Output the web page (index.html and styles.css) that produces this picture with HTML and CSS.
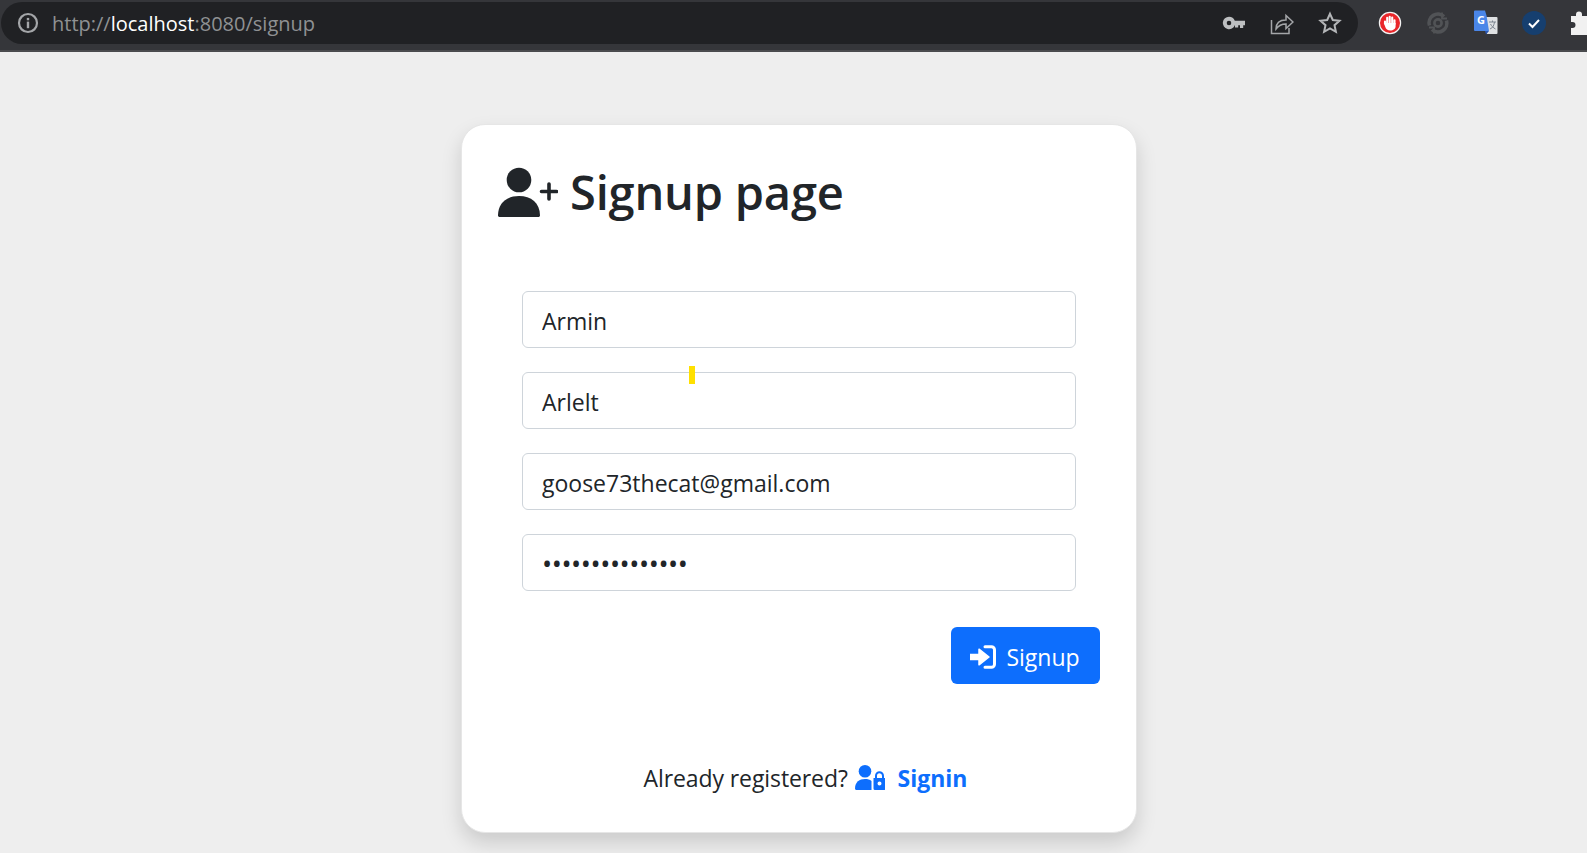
FILE: index.html
```html
<!DOCTYPE html>
<html lang="en">
<head>
<meta charset="utf-8">
<title>Signup page</title>
<link rel="stylesheet" href="styles.css">
</head>
<body>
<header class="toolbar">
  <div class="omnibox">
    <svg class="info-icon" viewBox="0 0 24 24" width="24" height="24"><circle cx="12" cy="12" r="9" fill="none" stroke="#a4a6a9" stroke-width="2.2"/><rect x="10.8" y="10.6" width="2.4" height="6.6" fill="#a4a6a9"/><rect x="10.8" y="6.9" width="2.4" height="2.4" fill="#a4a6a9"/></svg>
    <div class="url">http://<span class="host">localhost</span>:8080/signup</div>
    <div class="omni-actions">
      <svg viewBox="0 0 24 24" width="24" height="24"><path fill-rule="evenodd" d="M7 5.800a6.200 6.200 0 0 1 5.800 4h10.200v4.400h-1.800v2.800h-3.200v-2.800h-1.800v2.300h-3.200v-2.300h-.2A6.200 6.200 0 1 1 7 5.800Zm0 3.900a2.300 2.300 0 1 0 0 4.600 2.300 2.300 0 0 0 0-4.600Z" fill="#bdbfc1"/></svg>
      <svg viewBox="0 0 24 24" width="24" height="24" fill="none" stroke="#a4a6a9" stroke-width="1.5"><path d="M1.500 9v13.500h17.500v-5.500"/><path d="M6 18c0-6 4-9 10-9V4.500l7 6.500-7 6.500V13c-4 0-7.500 1.500-10 5Z"/></svg>
      <svg viewBox="0 0 24 24" width="24" height="24" fill="none" stroke="#b4b6b8" stroke-width="2"><path d="m12 2.800 2.800 6.200 6.700.7-5 4.500 1.400 6.600-5.900-3.400-5.900 3.400 1.400-6.600-5-4.500 6.700-.7Z"/></svg>
    </div>
  </div>
  <div class="extensions">
    <svg viewBox="0 0 26 26" width="26" height="26"><circle cx="13" cy="13" r="10.600" fill="#e9262a" stroke="#f4f4f4" stroke-width="1.200"/><path d="M8 13.500v-2M10.200 13V7.800M12.700 13V6.800M15.200 13V7.600M17.500 14v-3.800" stroke="#fff" stroke-width="2.100" stroke-linecap="round"/><path d="M6.800 13h11.800v3.200c0 2.500-2.200 4.300-5.300 4.300-2.700 0-4.300-1.400-5-3.400Z" fill="#fff"/></svg>
    <svg viewBox="0 0 26 26" width="26" height="26" fill="none" stroke="#515356"><path d="M4.500 15.500A8.800 8.800 0 0 1 19 6.500M21.500 10.500A8.800 8.800 0 0 1 7 19.500" stroke-width="3.600"/><circle cx="13" cy="13" r="3.600" stroke-width="2.600"/><path d="M17 2.500v6h5M9 23.500v-6H4" stroke-width="1.800"/></svg>
    <svg viewBox="0 0 26 26" width="26" height="26"><path d="M12 7h11.500a1 1 0 0 1 1 1v15a1 1 0 0 1-1 1H14Z" fill="#dfe1e3"/><path d="M1 1.500a1 1 0 0 1 1-1h10l1.500 5 2.500 15.500H2a1 1 0 0 1-1-1Z" fill="#4a86e8"/><path d="M12 21h4l-3 3.500Z" fill="#2a56b0"/><text class="g-letter" x="4" y="14">G</text><path d="M16 12h7M19.500 10.500v1.500M17 19c3-1 4-4 4.500-7M17.500 14c1 2 3 4 5 5" fill="none" stroke="#7c8590" stroke-width="1"/></svg>
    <svg viewBox="0 0 26 26" width="26" height="26"><circle cx="13" cy="13" r="12" fill="#163f6f"/><path d="m8 13.500 3.500 3.500 6.500-7" fill="none" stroke="#fff" stroke-width="2"/></svg>
    <svg viewBox="0 0 26 26" width="26" height="26"><path d="M10 1.500a3 3 0 0 1 3 3V6h6v6h1.500a3 3 0 0 1 0 6H19v7H2v-7h1.500a3 3 0 0 0 0-6H2V6h5V4.500a3 3 0 0 1 3-3Z" fill="#f1f1f1"/></svg>
  </div>
</header>
<main class="page">
  <section class="card">
    <h1 class="title">
      <svg class="title-icon" viewBox="0 0 60 50" width="60" height="50"><circle cx="21" cy="13" r="12.300" fill="#212529"/><path d="M0 48.500C0 36 9 29 21 29s21 7 21 19.500c0 .8-.8 1.500-1.500 1.500h-39C.8 50 0 49.300 0 48.500Z" fill="#212529"/><path d="M51 17v15M43.500 24.500h15" stroke="#212529" stroke-width="3.600" stroke-linecap="round"/></svg>
      <span>Signup page</span>
    </h1>
    <form class="form">
      <input class="field" type="text" value="Armin">
      <input class="field" type="text" value="Arlelt">
      <input class="field" type="text" value="goose73thecat@gmail.com">
      <input class="field field-password" type="password" value="passwordpasswor">
      <span class="marker"></span>
    </form>
    <div class="actions">
      <button class="btn" type="button">
        <svg viewBox="0 0 26 24" width="26" height="24"><path d="M0 9.500h9V4.200L19 12 9 19.800v-5.300H0Z" fill="#fff" stroke="#fff" stroke-linejoin="round" stroke-width="1.500"/><path d="M15 1.800h6.500a3 3 0 0 1 3 3v14.400a3 3 0 0 1-3 3H15" fill="none" stroke="#fff" stroke-width="3" stroke-linecap="round"/></svg>
        <span>Signup</span>
      </button>
    </div>
    <p class="signin">Already registered?
      <svg class="signin-icon" viewBox="0 0 30 25" width="30" height="25"><circle cx="10" cy="6.300" r="6.300" fill="#0d6efd"/><path d="M0 23.500C0 17 4.500 14 10 14c2.500 0 5 .6 6.500 2v9H1.500C.6 25 0 24.300 0 23.500Z" fill="#0d6efd"/><path d="M21 13.500v-2.800a3.500 3.500 0 0 1 7 0v2.800" fill="none" stroke="#0d6efd" stroke-width="2"/><path fill-rule="evenodd" d="M18.500 13h12v10.500a1.500 1.500 0 0 1-1.500 1.500h-9a1.500 1.500 0 0 1-1.500-1.500Zm6 3.500a2 2 0 1 0 0 4 2 2 0 0 0 0-4Z" fill="#0d6efd"/></svg>
      <a class="signin-link" href="#">Signin</a>
    </p>
  </section>
</main>
</body>
</html>
```
FILE: styles.css
```css
* { box-sizing: border-box; }
html, body { margin: 0; height: 100%; }
body {
  background: #eeeeee;
  color: #212529;
  font-family: "Open Sans", "Noto Sans", sans-serif;
  overflow: hidden;
}
.toolbar {
  height: 52px;
  background: #35363a;
  border-bottom: 2px solid #4a4b4e;
  display: flex;
  align-items: flex-start;
  overflow: hidden;
}
.omnibox {
  width: 1357px;
  height: 42px;
  margin: 2px 0 0 1px;
  background: #202124;
  border-radius: 21px;
  display: flex;
  align-items: center;
  padding-left: 15px;
  flex: none;
}
.info-icon { flex: none; }
.url {
  margin-left: 12px;
  font-size: 20px;
  color: #8f9193;
  white-space: nowrap;
}
.host { color: #ffffff; }
.omni-actions {
  margin-left: auto;
  margin-right: 16px;
  display: flex;
  gap: 24px;
  align-items: center;
}
.extensions {
  display: flex;
  gap: 22px;
  margin-left: 19px;
  margin-top: 10px;
  align-items: center;
  flex: none;
}
.g-letter { font: 700 11px "Open Sans", sans-serif; fill: #fff; }
.page {
  display: flex;
  justify-content: center;
  padding-top: 72px;
}
.card {
  width: 676px;
  height: 709px;
  background: #ffffff;
  border-radius: 24px;
  border: 1px solid #e6e6e6;
  box-shadow: 0 10px 20px rgba(0, 0, 0, 0.15);
  padding: 37px 36px 0;
  margin-left: 11px;
}
.title {
  margin: 0;
  display: flex;
  align-items: center;
  gap: 12px;
  font-size: 47px;
  font-weight: 550;
  line-height: 60px;
  letter-spacing: -0.2px;
}
.title-icon { flex: none; }
.form {
  position: relative;
  margin: 69px 24px 0;
  display: flex;
  flex-direction: column;
  gap: 24px;
}
.field {
  display: block;
  width: 100%;
  height: 57px;
  padding: 2px 19px 0;
  border: 1px solid #ced4da;
  border-radius: 6px;
  background: #fff;
  color: #212529;
  font-family: inherit;
  font-size: 23px;
  outline: none;
}
.field-password {
  font-size: 27px;
  letter-spacing: -0.45px;
}
.marker {
  position: absolute;
  left: 167px;
  top: 75px;
  width: 6px;
  height: 18px;
  background: #ffe000;
}
.actions {
  display: flex;
  justify-content: flex-end;
  margin-top: 36px;
}
.btn {
  width: 149px;
  height: 57px;
  display: flex;
  align-items: center;
  justify-content: center;
  gap: 10px;
  padding: 2px 1px 0 0;
  border: 0;
  border-radius: 6px;
  background: #0d6efd;
  color: #fff;
  font-family: inherit;
  font-size: 23px;
}
.signin {
  margin: 77px 0 0;
  padding-left: 13px;
  text-align: center;
  font-size: 23px;
  line-height: 34px;
  letter-spacing: -0.1px;
}
.signin-icon { vertical-align: -3px; margin: 0 7px 0 1px; }
.signin-link {
  color: #0d6efd;
  font-weight: 700;
  letter-spacing: 0;
  text-decoration: none;
}
```
